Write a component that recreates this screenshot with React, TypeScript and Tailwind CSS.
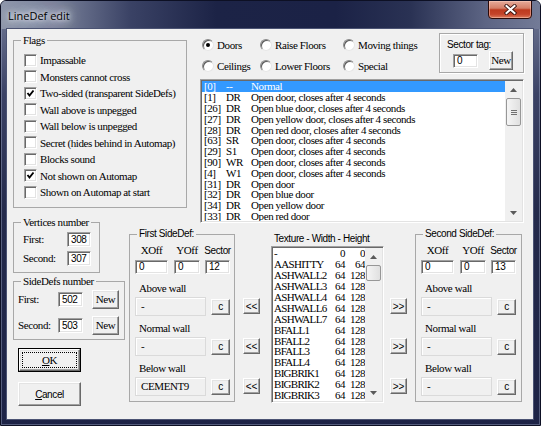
import React from 'react';

const SERIF = "font-['Liberation_Serif',serif] text-[11px] tracking-[-0.4px] text-black whitespace-nowrap";
const SANS = "font-['Liberation_Sans',Arial,sans-serif] text-[10px] tracking-[-0.4px] text-black whitespace-nowrap";
const RAISED =
    'bg-[#f0f0f0] border border-t-white border-l-white border-r-[#696969] border-b-[#696969] shadow-[inset_-1px_-1px_0_#a0a0a0,inset_1px_1px_0_#e3e3e3]';
const SUNKEN =
    'bg-white border border-t-[#a0a0a0] border-l-[#a0a0a0] border-r-white border-b-white shadow-[inset_1px_1px_0_#696969,inset_-1px_-1px_0_#e3e3e3]';

const FLAGS: [string, boolean][] = [
    ['Impassable', false],
    ['Monsters cannot cross', false],
    ['Two-sided (transparent SideDefs)', true],
    ['Wall above is unpegged', false],
    ['Wall below is unpegged', false],
    ['Secret (hides behind in Automap)', false],
    ['Blocks sound', false],
    ['Not shown on Automap', true],
    ['Shown on Automap at start', false],
];

const RADIOS: [string, boolean][] = [
    ['Doors', true],
    ['Raise Floors', false],
    ['Moving things', false],
    ['Ceilings', false],
    ['Lower Floors', false],
    ['Special', false],
];

const TYPES: [string, string, string][] = [
    ['[0]', '--', 'Normal'],
    ['[1]', 'DR', 'Open door, closes after 4 seconds'],
    ['[26]', 'DR', 'Open blue door, closes after 4 seconds'],
    ['[27]', 'DR', 'Open yellow door, closes after 4 seconds'],
    ['[28]', 'DR', 'Open red door, closes after 4 seconds'],
    ['[63]', 'SR', 'Open door, closes after 4 seconds'],
    ['[29]', 'S1', 'Open door, closes after 4 seconds'],
    ['[90]', 'WR', 'Open door, closes after 4 seconds'],
    ['[4]', 'W1', 'Open door, closes after 4 seconds'],
    ['[31]', 'DR', 'Open door'],
    ['[32]', 'DR', 'Open blue door'],
    ['[34]', 'DR', 'Open yellow door'],
    ['[33]', 'DR', 'Open red door'],
];

const TEXTURES: [string, string, string][] = [
    ['-', '0', '0'],
    ['AASHITTY', '64', '64'],
    ['ASHWALL2', '64', '128'],
    ['ASHWALL3', '64', '128'],
    ['ASHWALL4', '64', '128'],
    ['ASHWALL6', '64', '128'],
    ['ASHWALL7', '64', '128'],
    ['BFALL1', '64', '128'],
    ['BFALL2', '64', '128'],
    ['BFALL3', '64', '128'],
    ['BFALL4', '64', '128'],
    ['BIGBRIK1', '64', '128'],
    ['BIGBRIK2', '64', '128'],
    ['BIGBRIK3', '64', '128'],
];

const Group: React.FC<{ title: string; sans?: boolean; className?: string; children: React.ReactNode }> = ({
    title,
    sans,
    className,
    children,
}) => (
    <fieldset className={`border border-[#a8a8a8] m-0 p-0 min-w-0 shrink-0 ${className}`}>
        <legend className={`ml-[7px] px-[2px] leading-[12px] ${sans ? SANS : SERIF}`}>{title}</legend>
        {children}
    </fieldset>
);

const Check: React.FC<{ label: string; checked: boolean }> = ({ label, checked }) => (
    <div className="flex items-center h-[16.5px]">
        <span className={`w-[13px] h-[13px] shrink-0 flex items-center justify-center ${SUNKEN}`}>
            {checked && (
                <svg width="9" height="9" viewBox="0 0 9 9">
                    <path d="M1.5 4 L3.5 6.5 L7.5 1.5" stroke="#000" strokeWidth="1.9" fill="none" />
                </svg>
            )}
        </span>
        <span className={`ml-[3px] ${SERIF}`}>{label}</span>
    </div>
);

const Radio: React.FC<{ label: string; on: boolean }> = ({ label, on }) => (
    <div className="flex items-center h-[16px]">
        <span className="w-[12px] h-[12px] shrink-0 rounded-full bg-white border border-t-[#8a8a8a] border-l-[#8a8a8a] border-r-[#e6e6e6] border-b-[#e6e6e6] shadow-[inset_1px_1px_0_#5a5a5a] flex items-center justify-center">
            {on && <span className="w-[4px] h-[4px] rounded-full bg-black" />}
        </span>
        <span className={`ml-[3px] ${SERIF}`}>{label}</span>
    </div>
);

const Arrow: React.FC<{ up?: boolean }> = ({ up }) => (
    <div className="h-[17px] shrink-0 flex items-center justify-center">
        <svg width="7" height="4" viewBox="0 0 7 4">
            <polygon points={up ? '0,4 3.5,0 7,4' : '0,0 7,0 3.5,4'} fill="#5a5a5a" />
        </svg>
    </div>
);

const ScrollBar: React.FC<{ thumb: string; grip?: boolean }> = ({ thumb, grip }) => (
    <div className="w-[17px] h-full shrink-0 flex flex-col bg-[#f0f0f0]">
        <Arrow up />
        <div
            className={`mx-[1px] rounded-[2px] border border-[#979797] bg-[linear-gradient(to_right,#f5f5f5,#e0e0e0)] flex flex-col items-center justify-center gap-[1px] ${thumb}`}
        >
            {grip &&
                [0, 1, 2].map((i) => <span key={i} className="w-[6px] h-[1px] bg-[#707070]" />)}
        </div>
        <div className="flex-1" />
        <Arrow />
    </div>
);

const Input: React.FC<{ value: string; className: string }> = ({ value, className }) => (
    <div className={`${SUNKEN} flex items-center pl-[3px] ${className}`}>
        <span className={`${SANS} leading-none`}>{value}</span>
    </div>
);

const Btn: React.FC<{ className: string; children: React.ReactNode }> = ({ className, children }) => (
    <div className={`${RAISED} shrink-0 flex items-center justify-center ${className}`}>{children}</div>
);

const SideDef: React.FC<{ title: string; sector: string; walls: string[]; className?: string }> = ({
    title,
    sector,
    walls,
    className,
}) => (
    <Group title={title} sans className={`mt-[12px] h-[174px] ${className}`}>
        <div className="pl-[5px] pt-[4px] flex flex-col">
            <div className="flex h-[12px] items-center">
                <span className={`w-[33px] text-center ${SERIF}`}>XOff</span>
                <span className={`ml-[6px] w-[26px] text-center ${SERIF}`}>YOff</span>
                <span className={`ml-[5px] w-[25px] flex justify-center ${SANS}`}>Sector</span>
            </div>
            <div className="mt-[4px] flex">
                <Input value="0" className="w-[33px] h-[14px]" />
                <Input value="0" className="ml-[6px] w-[26px] h-[14px]" />
                <Input value={sector} className="ml-[5px] w-[25px] h-[14px]" />
            </div>
            {['Above wall', 'Normal wall', 'Below wall'].map((label, i) => (
                <div key={label} className={i === 0 ? 'mt-[8px]' : 'mt-[6px]'}>
                    <div className={`h-[12px] pl-[4px] flex items-center ${SERIF}`}>{label}</div>
                    <div className="mt-[3px] flex items-center h-[19px]">
                        <div className="w-[71px] h-[19px] bg-[#f0f0f0] border border-[#dadada] shadow-[inset_1px_1px_0_#fff] flex items-center pl-[5px]">
                            <span className={SERIF}>{walls[i]}</span>
                        </div>
                        <Btn className="ml-[5px] w-[19px] h-[16px]">
                            <span className={`${SANS} text-[9px]`}>c</span>
                        </Btn>
                    </div>
                </div>
            ))}
        </div>
    </Group>
);

const ArrowColumn: React.FC<{ label: string; className: string }> = ({ label, className }) => (
    <div className={`shrink-0 flex flex-col pt-[82px] gap-[24px] ${className}`}>
        {[0, 1, 2].map((i) => (
            <Btn key={i} className="w-[17px] h-[16px]">
                <span className={`${SANS} text-[8px] tracking-[0px]`}>{label}</span>
            </Btn>
        ))}
    </div>
);

export default function App() {
    return (
        <div className="w-[541px] h-[426px] flex flex-col rounded-t-[6px] border border-[#0d1024] bg-[linear-gradient(to_bottom,#747c98_0%,#3b4265_22%,#242a4b_50%,#1d2346_100%)] shadow-[inset_0_0_0_1px_rgba(190,200,225,0.35)] overflow-hidden">
            {/* title bar */}
            <div className="h-[28px] shrink-0 flex items-start bg-[linear-gradient(to_right,#8f97ab_0%,#7a829b_10%,#3a4265_24%,#1c2346_40%,#1b2246_62%,#2a3254_76%,#5d6584_90%,#737b97_100%)]">
                <span className="ml-[7px] mt-[7px] font-['Open_Sans',sans-serif] text-[11px] leading-[15px] text-black [text-shadow:0_0_4px_#fff,0_0_8px_#e8edf5,0_0_14px_#dde3ee,0_0_20px_#c9d0dd]">
                    LineDef edit
                </span>
                <div className="ml-auto mr-[8px] -mt-px w-[44px] h-[19px] rounded-b-[4px] border border-[#2c0a08] bg-[linear-gradient(to_bottom,#e6ab9a_0%,#d47f68_42%,#bd3a1f_52%,#c4442a_78%,#dc7a5c_100%)] shadow-[inset_0_0_0_1px_rgba(255,215,200,0.45)] flex items-center justify-center">
                    <svg width="13" height="11" viewBox="0 0 13 11">
                        <path d="M2.5 2 L10.5 9 M10.5 2 L2.5 9" stroke="#3b1510" strokeWidth="3.8" strokeLinecap="square" />
                        <path d="M2.5 2 L10.5 9 M10.5 2 L2.5 9" stroke="#fff" strokeWidth="2" strokeLinecap="square" />
                    </svg>
                </div>
            </div>

            {/* client */}
            <div className="ml-[6px] w-[526px] h-[390px] shrink-0 bg-[#f0f0f0] shadow-[0_0_0_1px_#4b5373] flex flex-col">
                {/* upper part */}
                <div className="flex h-[187px] shrink-0">
                    <Group title="Flags" className="ml-[6px] mt-[5px] w-[174px] h-[174px]">
                        <div className="pl-[10px] pt-[6px]">
                            {FLAGS.map(([label, checked]) => (
                                <Check key={label} label={label} checked={checked} />
                            ))}
                        </div>
                    </Group>

                    <div className="ml-[13px] mt-[4px] w-[324px] flex flex-col">
                        <div className="flex h-[40px]">
                            <div className="pl-[2px] pt-[4px] grid grid-cols-[58px_83px_auto] auto-rows-[16px] gap-y-[5px]">
                                {RADIOS.map(([label, on]) => (
                                    <Radio key={label} label={label} on={on} />
                                ))}
                            </div>
                            <div className="ml-auto w-[85px] h-[40px] border border-[#a8a8a8] shadow-[1px_1px_0_#fff,inset_1px_1px_0_#fff] pl-[7px] pt-[4px] flex flex-col">
                                <div className={`h-[12px] flex items-center ${SANS}`}>Sector tag:</div>
                                <div className="mt-[1px] h-[19px] flex items-center">
                                    <Input value="0" className="ml-[6px] w-[25px] h-[14px]" />
                                    <Btn className="ml-[11px] w-[24px] h-[19px]">
                                        <span className={SERIF}>New</span>
                                    </Btn>
                                </div>
                            </div>
                        </div>

                        <div className={`mt-[6px] w-[324px] h-[146px] p-[1px] flex ${SUNKEN}`}>
                            <div className="flex-1 overflow-hidden">
                                {TYPES.map(([code, kind, desc], i) => (
                                    <div
                                        key={code}
                                        className={`h-[10.8px] flex items-center ${i === 0 ? 'bg-[#3399ff]' : ''}`}
                                    >
                                        <span className={`pl-[2px] w-[24px] ${SERIF} leading-[10px] ${i === 0 ? 'text-white' : ''}`}>
                                            {code}
                                        </span>
                                        <span className={`w-[25px] ${SERIF} leading-[10px] ${i === 0 ? 'text-white' : ''}`}>
                                            {kind}
                                        </span>
                                        <span className={`${SERIF} leading-[10px] ${i === 0 ? 'text-white' : ''}`}>{desc}</span>
                                    </div>
                                ))}
                            </div>
                            <ScrollBar thumb="h-[28px]" grip />
                        </div>
                    </div>
                </div>

                {/* lower part */}
                <div className="flex">
                    <div className="ml-[6px] w-[112px] shrink-0 flex flex-col items-start">
                        <Group title="Vertices number" className="w-[87px] h-[57px]">
                            <div className="pl-[9px] pt-[4px] flex flex-col gap-[4px]">
                                {[
                                    ['First:', '308'],
                                    ['Second:', '307'],
                                ].map(([label, value]) => (
                                    <div key={label} className="flex items-center h-[15px]">
                                        <span className={`w-[44px] ${SERIF}`}>{label}</span>
                                        <Input value={value} className="w-[24px] h-[15px]" />
                                    </div>
                                ))}
                            </div>
                        </Group>
                        <Group title="SideDefs number" className="mt-[2px] w-[112px] h-[65px]">
                            <div className="pl-[4px] pt-[3px] flex flex-col gap-[7px]">
                                {[
                                    ['First:', '502'],
                                    ['Second:', '503'],
                                ].map(([label, value]) => (
                                    <div key={label} className="flex items-center h-[19px]">
                                        <span className={`w-[40px] ${SERIF}`}>{label}</span>
                                        <Input value={value} className="w-[25px] h-[15px]" />
                                        <Btn className="ml-[9px] w-[27px] h-[19px]">
                                            <span className={SERIF}>New</span>
                                        </Btn>
                                    </div>
                                ))}
                            </div>
                        </Group>
                        <div className="mt-[8px] ml-[5px] w-[63px] h-[24px] border border-black">
                            <div className={`w-full h-full p-[2px] ${RAISED}`}>
                                <div className="w-full h-full border border-dotted border-black flex items-center justify-center">
                                    <span className={SERIF}>
                                        <span className="underline">O</span>K
                                    </span>
                                </div>
                            </div>
                        </div>
                        <Btn className="mt-[10px] ml-[5px] w-[63px] h-[24px]">
                            <span className={SANS}>
                                <span className="underline">C</span>ancel
                            </span>
                        </Btn>
                    </div>

                    <SideDef title="First SideDef:" sector="12" walls={['-', '-', 'CEMENT9']} className="ml-[4px] w-[106px]" />

                    <ArrowColumn label="<<" className="w-[36px] pl-[8px]" />

                    <div className="w-[113px] shrink-0 flex flex-col">
                        <div className={`mt-[16px] h-[12px] pl-[3px] flex items-center ${SANS}`}>
                            Texture - Width - Height
                        </div>
                        <div className={`mt-[2px] h-[157px] p-[1px] flex ${SUNKEN}`}>
                            <div className="flex-1 overflow-hidden">
                                {TEXTURES.map(([name, w, h]) => (
                                    <div key={name} className="h-[10.9px] flex items-center">
                                        <span className={`pl-[1px] w-[59px] ${SERIF} text-[10.5px] tracking-[-0.7px] leading-[10px]`}>
                                            {name}
                                        </span>
                                        <span className={`w-[13px] text-right ${SERIF} text-[10.5px] tracking-[-0.5px] leading-[10px]`}>
                                            {w}
                                        </span>
                                        <span className={`w-[20px] text-right ${SERIF} text-[10.5px] tracking-[-0.5px] leading-[10px]`}>
                                            {h}
                                        </span>
                                    </div>
                                ))}
                            </div>
                            <ScrollBar thumb="h-[16px]" />
                        </div>
                    </div>

                    <ArrowColumn label=">>" className="w-[31px] pl-[6px]" />

                    <SideDef title="Second SideDef:" sector="13" walls={['-', '-', '-']} className="w-[107px]" />
                </div>
            </div>
        </div>
    );
}
